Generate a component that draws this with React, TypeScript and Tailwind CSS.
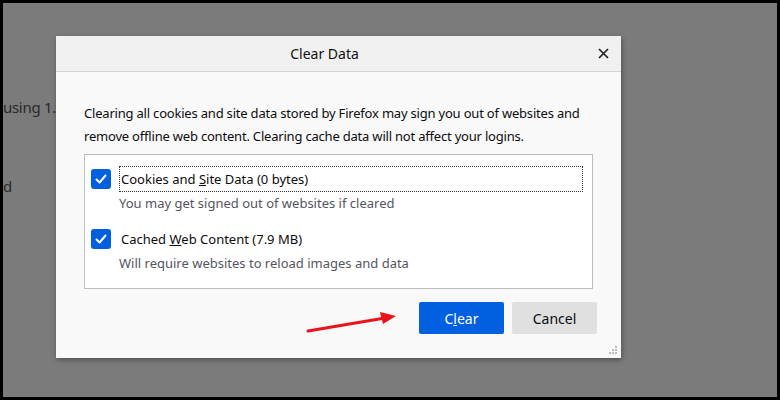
import React from "react";

function CheckBox() {
  return (
    <span className="w-5 h-5 rounded-[3px] bg-[#0060df] flex items-center justify-center shrink-0">
      <svg width="14" height="14" viewBox="0 0 14 14" fill="none">
        <path d="M2.5 7.5 L5.6 10.5 L11.5 3.5" stroke="white" strokeWidth="2" strokeLinecap="round" strokeLinejoin="round" />
      </svg>
    </span>
  );
}

function Option({ label, sub, focused }: { label: React.ReactNode; sub: string; focused?: boolean }) {
  return (
    <div className="flex flex-col">
      <div className="flex items-center h-[26px]">
        <CheckBox />
        <span
          className={`ml-[8px] flex-1 h-[26px] flex items-center pl-[1px] pt-[2px] mr-[9px] border border-dotted ${
            focused ? "border-[#333]" : "border-transparent"
          }`}
        >
          <span>{label}</span>
        </span>
      </div>
      <div className="pl-[28px] text-[#55555f] leading-[20px] mt-px">{sub}</div>
    </div>
  );
}

export default function App() {
  return (
    <div
      className="w-[780px] h-[400px] bg-black pt-[3px] pl-[3px]"
      style={{ fontFamily: '"Noto Sans", "Open Sans", sans-serif' }}
    >
      <div className="relative w-[774px] h-[394px] bg-[#7b7b7b] overflow-hidden text-[#2a2a2a] text-[15px]">
        {/* page behind the overlay */}
        <div className="pt-[92px] leading-[24px] w-[53px] overflow-hidden whitespace-nowrap tracking-[-0.3px]">
          using 1.5
        </div>
        <div className="pt-[55px] leading-[24px] w-[53px]">d</div>

        {/* dialog */}
        <div className="absolute left-[53px] top-[33px] w-[565px] h-[322px] bg-[#f9f9fa] flex flex-col shadow-[1px_2px_5px_rgba(0,0,0,0.35)] text-[13px] text-[#0c0c0d]">
          <div className="h-[36px] bg-[#f0f0f0] border-b border-[#d4d4d4] flex items-center shrink-0">
            <div className="flex-1 text-center text-[14px] text-[#111]">Clear Data</div>
            <div className="w-[28px] pl-[5px] flex items-center">
              <svg width="11" height="11" viewBox="0 0 11 11">
                <path d="M1 1 L10 10 M10 1 L1 10" stroke="#222" strokeWidth="1.7" />
              </svg>
            </div>
          </div>

          <div className="px-[28px] pt-[30px] leading-[23px] tracking-[-0.2px]">
            Clearing all cookies and site data stored by Firefox may sign you out of websites and remove offline web
            content. Clearing cache data will not affect your logins.
          </div>

          <div className="ml-[28px] mr-[28px] mt-[6px] h-[135px] bg-white border border-[#bdbdbd] pl-[6px] pt-[11px] flex flex-col gap-[13px]">
            <Option
              focused
              label={
                <>
                  Cookies and <u>S</u>ite Data (0 bytes)
                </>
              }
              sub="You may get signed out of websites if cleared"
            />
            <Option
              label={
                <>
                  Cached <u>W</u>eb Content (7.9 MB)
                </>
              }
              sub="Will require websites to reload images and data"
            />
          </div>

          <div className="flex justify-end gap-[8px] mt-[13px] pr-[24px]">
            <button className="w-[85px] h-[32px] rounded-[2px] bg-[#0060df] text-white text-[14px]">
              C<u>l</u>ear
            </button>
            <button className="w-[85px] h-[32px] rounded-[2px] bg-[#e0e0e1] text-[#0c0c0d] text-[14px]">
              Cancel
            </button>
          </div>

          {/* resize grip */}
          <svg className="absolute right-[3px] bottom-[3px]" width="10" height="10" viewBox="0 0 10 10">
            <rect x="7" y="1" width="2" height="2" fill="#bbb" />
            <rect x="4" y="4" width="2" height="2" fill="#bbb" />
            <rect x="7" y="4" width="2" height="2" fill="#bbb" />
            <rect x="1" y="7" width="2" height="2" fill="#bbb" />
            <rect x="4" y="7" width="2" height="2" fill="#bbb" />
            <rect x="7" y="7" width="2" height="2" fill="#bbb" />
          </svg>
        </div>

        {/* red annotation arrow */}
        <svg className="absolute left-[300px] top-[305px]" width="100" height="30" viewBox="0 0 100 30">
          <path d="M5 23 L82 10" stroke="#e8141a" strokeWidth="3" strokeLinecap="round" />
          <path d="M93 8 L77 4 L80 16 Z" fill="#e8141a" />
        </svg>
      </div>
    </div>
  );
}
